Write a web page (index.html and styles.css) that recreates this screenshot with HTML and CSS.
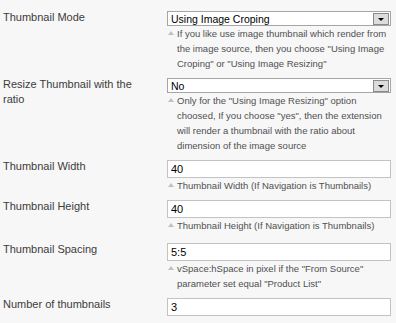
FILE: index.html
```html
<!DOCTYPE html>
<html lang="en">
<head>
	<meta charset="UTF-8">
	<title>Thumbnail settings</title>
	<link rel="stylesheet" href="styles.css">
</head>
<body>
	<div class="params">
		<div class="row">
			<label class="key">Thumbnail Mode</label>
			<div class="field">
				<div class="select"><span class="value">Using Image Croping</span><span class="arrow"></span></div>
				<p class="hint">If you like use image thumbnail which render from the image source, then you choose "Using Image Croping" or "Using Image Resizing"</p>
			</div>
		</div>
		<div class="row">
			<label class="key">Resize Thumbnail with the ratio</label>
			<div class="field">
				<div class="select"><span class="value">No</span><span class="arrow"></span></div>
				<p class="hint">Only for the "Using Image Resizing" option choosed, If you choose "yes", then the extension will render a thumbnail with the ratio about dimension of the image source</p>
			</div>
		</div>
		<div class="row">
			<label class="key">Thumbnail Width</label>
			<div class="field">
				<input class="text" type="text" value="40">
				<p class="hint">Thumbnail Width (If Navigation is Thumbnails)</p>
			</div>
		</div>
		<div class="row">
			<label class="key">Thumbnail Height</label>
			<div class="field">
				<input class="text" type="text" value="40">
				<p class="hint">Thumbnail Height (If Navigation is Thumbnails)</p>
			</div>
		</div>
		<div class="row spaced">
			<label class="key">Thumbnail Spacing</label>
			<div class="field">
				<input class="text" type="text" value="5:5">
				<p class="hint">vSpace:hSpace in pixel if the "From Source" parameter set equal "Product List"</p>
			</div>
		</div>
		<div class="row">
			<label class="key">Number of thumbnails</label>
			<div class="field">
				<input class="text" type="text" value="3">
			</div>
		</div>
	</div>
</body>
</html>
```

FILE: styles.css
```css
* {
	padding: 0;
	margin: 0;
	box-sizing: border-box;
}
body {
	background: #f7f7f7;
	font-family: "Liberation Sans", Arial, sans-serif;
}
.params {
	padding: 10px 0 0 3px;
}
.row {
	display: flex;
	align-items: flex-start;
	margin-bottom: 6px;
}
/* margins collapse, so this one wins over the 6px above */
.row.spaced {
	margin-top: 9px;
}
.key {
	width: 164px;
	font-size: 11px;
	line-height: 15px;
	color: #3c3c3c;
	padding-right: 30px;
}
.field {
	width: 224px;
	padding-top: 1px;
}
/* fake select box */
.select {
	height: 15px;
	border: 1px solid #a5a5a5;
	background: #fff;
	display: flex;
	align-items: center;
	justify-content: space-between;
	padding: 0 1px 0 3px;
}
.select .value {
	font-size: 10.5px;
	color: #000;
}
.select .arrow {
	width: 16px;
	height: 12px;
	background: #dcdcdc;
	border: 1px solid #8a8a8a;
	position: relative;
}
.select .arrow:after {
	content: "";
	position: absolute;
	left: 4px;
	top: 4px;
	border-left: 3.5px solid transparent;
	border-right: 3.5px solid transparent;
	border-top: 3.5px solid #000;
}
.text {
	display: block;
	width: 100%;
	height: 18px;
	border: 1px solid #c3c3c3;
	background: #fff;
	font-family: "Liberation Sans", Arial, sans-serif;
	font-size: 11px;
	color: #000;
	padding: 0 3px;
	outline: none;
}
.hint {
	position: relative;
	padding-left: 10px;
	font-size: 9.5px;
	line-height: 15px;
	color: #505050;
}
/* little grey triangle in front of the hint */
.hint:before {
	content: "";
	position: absolute;
	left: 1px;
	top: 5px;
	border-left: 3px solid transparent;
	border-right: 3px solid transparent;
	border-bottom: 4px solid #bcc1c5;
}
```
